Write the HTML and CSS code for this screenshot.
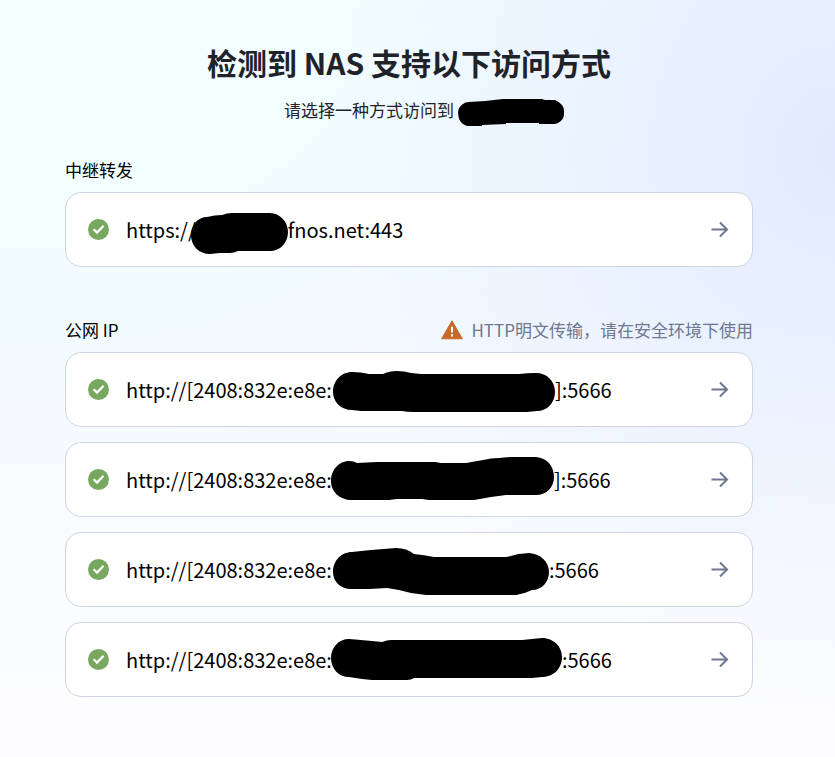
FILE: index.html
```html
<!DOCTYPE html>
<html lang="zh-CN">
<head>
    <meta charset="UTF-8">
    <meta name="viewport" content="width=device-width, initial-scale=1.0">
    <title>检测到 NAS 支持以下访问方式</title>
    <link rel="stylesheet" href="styles.css">
</head>
<body>
    <!-- Shared icons -->
    <svg class="sprite" aria-hidden="true">
        <symbol id="icon-check" viewBox="0 0 21 21">
            <circle cx="10.5" cy="10.5" r="10.5" fill="#78a75f"/>
            <path d="M5.6 10.2l3.4 3.4 6.6-6.8" fill="none" stroke="#fff" stroke-width="2.2"/>
        </symbol>
        <symbol id="icon-arrow" viewBox="0 0 18 18">
            <path d="M0.5 8.5H16M9 1.5l7 7-7 7" fill="none" stroke="#6e7890" stroke-width="2"/>
        </symbol>
    </svg>

    <main class="container">
        <header class="header">
            <h1>检测到 NAS 支持以下访问方式</h1>
            <p class="subtitle">
                <span>请选择一种方式访问到</span>
                <svg class="name-mask" width="106" height="28" viewBox="0 0 106 28" aria-hidden="true">
                    <path d="M0 15Q0 9 5 6Q7 4 11 4L27 3L45 1H84L87 2H97Q106 6 106 13V16Q106 22 100 25L97 26H81V25H48V26L24 27V28H9Q3 26 1 21Z"/>
                </svg>
            </p>
        </header>

        <section class="group">
            <div class="group-head">
                <h2>中继转发</h2>
            </div>
            <a class="card" href="#">
                <svg class="check" aria-hidden="true"><use href="#icon-check"/></svg>
                <span class="url">
                    <span>https://</span>
                    <svg class="mask overlap" width="98" height="51" viewBox="0 0 98 51" aria-hidden="true">
                        <path d="M1 31C1 21 8 13 17 13Q25 11 32 11Q37 9 42 9H80C90 9 98 18 98 28C98 39 90 47 80 47H48Q44 49 40 49H30L20 50C9 50 1 42 1 31Z"/>
                    </svg>
                    <span>fnos.net:443</span>
                </span>
                <svg class="arrow" aria-hidden="true"><use href="#icon-arrow"/></svg>
            </a>
        </section>

        <section class="group">
            <div class="group-head">
                <h2>公网 IP</h2>
                <p class="warning">
                    <svg width="22" height="20" viewBox="0 0 22 20" aria-hidden="true">
                        <path d="M11 .8L21.4 18.8H.6Z" fill="#c66a28" stroke="#c66a28" stroke-width="1" stroke-linejoin="round"/>
                        <path d="M11 6.8v5.8M11 14.2v2.2" stroke="#fff" stroke-width="2"/>
                    </svg>
                    <span>HTTP明文传输，请在安全环境下使用</span>
                </p>
            </div>
            <a class="card" href="#">
                <svg class="check" aria-hidden="true"><use href="#icon-check"/></svg>
                <span class="url">
                    <span>http://[2408:832e:e8e:</span>
                    <svg class="mask" width="224" height="51" viewBox="0 0 224 51" aria-hidden="true">
                        <path d="M2 28C2 17 10 8 21 8Q30 8 38 10H52Q58 7 66 7Q73 7 80 9L90 10H188Q196 9 205 9C216 9 224 17 224 28C224 39 216 47 206 47L196 48H83Q76 48 71 47H30L21 46C10 46 2 38 2 28Z"/>
                    </svg>
                    <span>]:5666</span>
                </span>
                <svg class="arrow" aria-hidden="true"><use href="#icon-arrow"/></svg>
            </a>
            <a class="card" href="#">
                <svg class="check" aria-hidden="true"><use href="#icon-check"/></svg>
                <span class="url">
                    <span>http://[2408:832e:e8e:</span>
                    <svg class="mask" width="223" height="51" viewBox="0 0 223 51" aria-hidden="true">
                        <path d="M0 27C0 16 8 7 18 7Q23 7 26 9L46 8H105Q108 9 111 9H135L152 6Q160 4 168 4L180 3H205C216 4 223 12 223 23C223 33 216 41 205 41H175L160 43L143 46H98L91 45H66L58 46H21C9 46 0 38 0 27Z"/>
                    </svg>
                    <span>]:5666</span>
                </span>
                <svg class="arrow" aria-hidden="true"><use href="#icon-arrow"/></svg>
            </a>
            <a class="card" href="#">
                <svg class="check" aria-hidden="true"><use href="#icon-check"/></svg>
                <span class="url">
                    <span>http://[2408:832e:e8e:</span>
                    <svg class="mask" width="218" height="51" viewBox="0 0 218 51" aria-hidden="true">
                        <path d="M2 28C2 17 10 8 21 8L40 6L65 4Q76 4 83 10Q93 11 103 13H176Q187 9 198 9C210 10 218 18 218 28C218 38 211 46 201 46Q193 50 185 51H95L80 49L68 46L56 44L38 45H20C10 45 2 38 2 28Z"/>
                    </svg>
                    <span>:5666</span>
                </span>
                <svg class="arrow" aria-hidden="true"><use href="#icon-arrow"/></svg>
            </a>
            <a class="card" href="#">
                <svg class="check" aria-hidden="true"><use href="#icon-check"/></svg>
                <span class="url">
                    <span>http://[2408:832e:e8e:</span>
                    <svg class="mask" width="231" height="51" viewBox="0 0 231 51" aria-hidden="true">
                        <path d="M0 24C0 13 8 5 18 5Q30 6 51 8Q56 6 60 6H191L211 4C223 4 231 13 231 23C231 34 223 43 211 43L201 44H83Q80 46 76 46H41L31 45L18 43C8 43 0 35 0 24Z"/>
                    </svg>
                    <span>:5666</span>
                </span>
                <svg class="arrow" aria-hidden="true"><use href="#icon-arrow"/></svg>
            </a>
        </section>
    </main>
</body>
</html>
```
FILE: styles.css
```css
* {
    box-sizing: border-box;
}

body {
    margin: 0;
    min-height: 100vh;
    font-family: "Noto Sans CJK SC", sans-serif;
    font-size: 17px;
    line-height: 24px;
    color: #1f2329;
    background:
        radial-gradient(ellipse 60% 75% at 100% 20%, #e2eaff 0%, rgba(230, 238, 255, 0.7) 40%, rgba(240, 246, 255, 0) 100%),
        radial-gradient(ellipse 90% 65% at 0% 0%, #f3ffff 0%, rgba(242, 254, 255, 0.8) 50%, rgba(246, 252, 255, 0) 100%),
        linear-gradient(180deg, #eff8ff 0%, #f3f8ff 40%, #f9fbff 70%, #fdfdff 100%);
}

h1,
h2,
p {
    margin: 0;
}

.sprite {
    display: none;
}

.container {
    padding: 40px 82px 60px 65px;
}

.header {
    display: flex;
    flex-direction: column;
    align-items: center;
    gap: 14px;
    margin-bottom: 32px;
}

h1 {
    font-size: 30px;
    line-height: 44px;
    font-weight: 700;
}

.subtitle {
    display: flex;
    align-items: flex-start;
    gap: 4px;
    height: 28px;
}

/* the mask runs past the centred text */
.name-mask {
    margin-right: -30px;
}

.group {
    display: flex;
    flex-direction: column;
    gap: 15px;
}

.group + .group {
    margin-top: 51px;
}

.group-head {
    display: flex;
    justify-content: space-between;
    align-items: center;
    margin-bottom: -5px;
}

h2 {
    font-size: 17px;
    font-weight: 400;
    color: #000;
}

.warning {
    display: flex;
    align-items: center;
    gap: 8px;
    color: #6e7890;
}

.card {
    display: flex;
    align-items: center;
    height: 75px;
    padding: 0 23px 0 22px;
    border: 1px solid #cfd4e2;
    border-radius: 16px;
    background: #fff;
    color: #000;
    font-size: 20px;
    text-decoration: none;
}

.card:hover {
    border-color: #6e7890;
}

.check {
    width: 21px;
    height: 21px;
    margin-right: 17px;
}

.url {
    display: flex;
    flex: 1;
    align-items: center;
    white-space: nowrap;
}

.mask {
    margin-left: -1px;
}

.mask.overlap {
    margin-left: -6px;
}

.arrow {
    width: 18px;
    height: 18px;
}
```
